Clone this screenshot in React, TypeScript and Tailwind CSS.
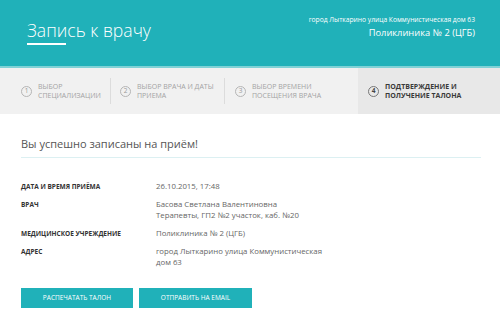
const steps = [
  { n: 1, lines: ['Выбор', 'специализации'], width: 'w-[110px] pl-[21px]' },
  { n: 2, lines: ['Выбор врача и даты', 'приема'], width: 'w-[113px] pl-[9px]' },
  { n: 3, lines: ['Выбор времени', 'посещения врача'], width: 'w-[133px] pl-[10px]' },
];

const rows = [
  { label: 'Дата и время приёма', value: ['26.10.2015, 17:48'] },
  { label: 'Врач', value: ['Басова Светлана Валентиновна', 'Терапевты, ГП2 №2 участок, каб. №20'] },
  { label: 'Медицинское учреждение', value: ['Поликлиника № 2 (ЦГБ)'] },
  { label: 'Адрес', value: ['город Лыткарино улица Коммунистическая', 'дом 63'] },
];

export default function App() {
  return (
    <div
      className="w-[500px] h-[325px] overflow-hidden bg-white"
      style={{ fontFamily: '"Open Sans", "DejaVu Sans", sans-serif' }}
    >
      {/* Header */}
      <header className="h-[68px] bg-[#20b1b9] border-b-2 border-[#7fd2d6] flex justify-between">
        <div className="pl-[27px] pt-[20px]">
          <h1 className="text-[17.6px] leading-[20px] font-light text-white">Запись к врачу</h1>
          <div className="mt-[3px] h-[2px] w-[39px] bg-white" />
        </div>
        <div className="pr-[25px] pt-[15px] text-right text-white">
          <div className="text-[6.7px] leading-[10px]">город Лыткарино улица Коммунистическая дом 63</div>
          <div className="mt-[2px] text-[9.3px] leading-[12px]">Поликлиника № 2 (ЦГБ)</div>
        </div>
      </header>

      {/* Steps */}
      <nav className="h-[46px] bg-[#f1f1f1] flex">
        {steps.map((s, i) => (
          <div key={s.n} className="flex">
            {i > 0 && <div className="w-px h-[26px] self-center bg-[#dcdcdc]" />}
            <div className={`${s.width} flex items-center gap-[6px]`}>
              <span className="w-[11px] h-[11px] shrink-0 rounded-full border border-[#b5b5b5] text-[6.5px] leading-none text-[#999] flex items-center justify-center">
                {s.n}
              </span>
              <span className="text-[7px] leading-[9px] uppercase text-[#a3a3a3]">
                {s.lines[0]}
                <br />
                {s.lines[1]}
              </span>
            </div>
          </div>
        ))}
        <div className="flex-1 bg-[#e8e8e8] flex items-center gap-[6px] pl-[10px]">
          <span className="w-[11px] h-[11px] shrink-0 rounded-full border border-[#777] text-[6.5px] font-bold leading-none text-[#444] flex items-center justify-center">
            4
          </span>
          <span className="text-[7px] leading-[9px] uppercase font-bold text-[#3a3a3a]">
            Подтверждение и
            <br />
            получение талона
          </span>
        </div>
      </nav>

      {/* Content */}
      <main className="px-[21px] pr-[19px]">
        <h2 className="pt-[23px] pb-[6px] text-[11px] leading-[14px] text-[#555] border-b border-[#dcf0f2]">
          Вы успешно записаны на приём!
        </h2>

        <div className="pt-[23px] flex flex-col gap-[7px]">
          {rows.map((r) => (
            <div key={r.label} className="flex">
              <div className="w-[135px] shrink-0 text-[6.5px] leading-[11px] font-bold uppercase text-[#333]">
                {r.label}
              </div>
              <div className="text-[7.8px] leading-[11px] text-[#666]">
                {r.value.map((v) => (
                  <div key={v}>{v}</div>
                ))}
              </div>
            </div>
          ))}
        </div>

        <div className="mt-[20px] flex gap-[6px]">
          <button className="w-[112px] h-[20px] bg-[#20b1b9] text-white text-[6.5px] uppercase">
            Распечатать талон
          </button>
          <button className="w-[113px] h-[20px] bg-[#20b1b9] text-white text-[6.5px] uppercase">
            Отправить на email
          </button>
        </div>
      </main>
    </div>
  );
}
